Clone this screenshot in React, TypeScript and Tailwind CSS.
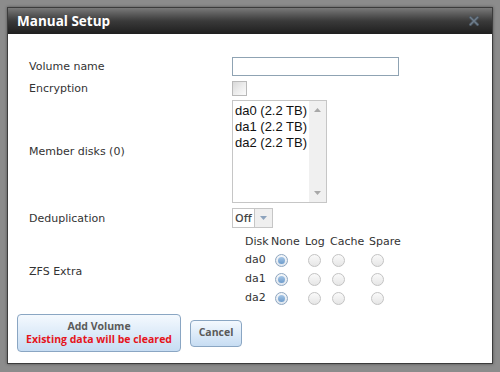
import React from 'react';

const labelCls = "w-[215px] pl-[12px] text-[11px] text-[#333] font-['DejaVu_Sans',Verdana,sans-serif] leading-none";

function Radio({ checked }: { checked?: boolean }) {
  return (
    <span
      className={
        "flex h-[13px] w-[13px] items-center justify-center rounded-full border " +
        (checked ? "border-[#8ea6c0] bg-gradient-to-b from-[#f4f7fa] to-[#dfe6ee]" : "border-[#c3c3c3] bg-gradient-to-b from-[#fafafa] to-[#e6e6e6]")
      }
    >
      {checked && <span className="h-[7px] w-[7px] rounded-full bg-gradient-to-b from-[#a6c6e6] to-[#6c9bcb]" />}
    </span>
  );
}

export default function App() {
  const disks = ['da0', 'da1', 'da2'];

  return (
    <div className="h-[372px] w-[500px] bg-[#8c8c8c] p-[7px]">
      <div className="flex h-[357px] w-[486px] flex-col border border-[#3c3c3c] bg-white shadow-[0_0_3px_rgba(0,0,0,0.4)]">
        {/* title bar */}
        <div className="flex h-[26px] items-center justify-between bg-gradient-to-b from-[#7a7a7a] via-[#3a3a3a] to-[#1f1f1f] pl-[9px] pr-[13px]">
          <span className="font-['Open_Sans',sans-serif] text-[13.5px] font-bold text-white">Manual Setup</span>
          <svg width="10" height="10" viewBox="0 0 10 10">
            <path d="M1.5 1.5 L8.5 8.5 M8.5 1.5 L1.5 8.5" stroke="#4a5560" strokeWidth="3" strokeLinecap="square" />
            <path d="M1.5 1.5 L8.5 8.5 M8.5 1.5 L1.5 8.5" stroke="#6f7d8b" strokeWidth="1.4" strokeLinecap="square" />
          </svg>
        </div>

        {/* form body */}
        <div className="flex flex-col px-[9px] pt-[23px]">
          <div className="flex h-[19px] items-center">
            <div className={labelCls}>Volume name</div>
            <input className="h-[19px] w-[167px] border border-[#8fa3b3] outline-none" />
          </div>

          <div className="mt-[5px] flex h-[15px] items-center">
            <div className={labelCls}>Encryption</div>
            <span className="h-[15px] w-[15px] border border-[#b9b9b9] bg-gradient-to-br from-[#d8d8d8] via-[#ececec] to-[#fbfbfb]" />
          </div>

          <div className="mt-[4px] flex h-[103px] items-center">
            <div className={labelCls}>Member disks (0)</div>
            <div className="flex h-[103px] w-[95px] border border-[#c6c6c6]">
              <div className="flex-1 pl-[2px] pt-[2px] font-['Liberation_Sans',Arial,sans-serif] text-[13px] leading-[16px] text-[#111]">
                <div>da0 (2.2 TB)</div>
                <div>da1 (2.2 TB)</div>
                <div>da2 (2.2 TB)</div>
              </div>
              <div className="flex w-[17px] flex-col items-center justify-between bg-[#f0f0f0] py-[7px]">
                <svg width="7" height="4" viewBox="0 0 7 4"><path d="M0 4 L3.5 0 L7 4 Z" fill="#a8a8a8" /></svg>
                <svg width="7" height="4" viewBox="0 0 7 4"><path d="M0 0 L3.5 4 L7 0 Z" fill="#a8a8a8" /></svg>
              </div>
            </div>
          </div>

          <div className="mt-[5px] flex h-[20px] items-center">
            <div className={labelCls}>Deduplication</div>
            <div className="flex h-[20px] w-[41px] border border-[#c6c6c6]">
              <span className="flex w-[21px] items-center pl-[2px] font-['Open_Sans',sans-serif] text-[11px] font-semibold text-[#444]">Off</span>
              <span className="flex flex-1 items-center justify-center border-l border-[#c6c6c6] bg-[#efefef]">
                <svg width="7" height="4" viewBox="0 0 7 4"><path d="M0 0 L3.5 4 L7 0 Z" fill="#8da3bd" /></svg>
              </span>
            </div>
          </div>

          <div className="mt-[6px] flex h-[74px] items-center">
            <div className={labelCls}>ZFS Extra</div>
            <div className="ml-[13px] flex flex-col font-['DejaVu_Sans',Verdana,sans-serif] text-[11px] text-[#333]">
              <div className="flex h-[17px] items-center">
                <span className="w-[26px]">Disk</span>
                <span className="w-[34px]">None</span>
                <span className="w-[25px]">Log</span>
                <span className="w-[39px]">Cache</span>
                <span className="w-[37px]">Spare</span>
              </div>
              {disks.map((d) => (
                <div key={d} className="flex h-[19px] items-center">
                  <span className="w-[26px]">{d}</span>
                  <span className="w-[34px] pl-[4px]"><Radio checked /></span>
                  <span className="w-[25px] pl-[3px]"><Radio /></span>
                  <span className="w-[39px] pl-[2px]"><Radio /></span>
                  <span className="w-[37px] pl-[2px]"><Radio /></span>
                </div>
              ))}
            </div>
          </div>

          <div className="mt-[6px] flex items-center gap-[9px] font-['Open_Sans',sans-serif] text-[10.5px] font-bold">
            <button className="flex h-[38px] w-[164px] flex-col items-center justify-center rounded-[4px] border border-[#8aa6c3] bg-gradient-to-b from-[#f4f9fe] to-[#c7ddf3] leading-[13px]">
              <span className="text-[#5a5a5a]">Add Volume</span>
              <span className="text-[#e5141c]">Existing data will be cleared</span>
            </button>
            <button className="h-[27px] w-[52px] rounded-[4px] border border-[#8aa6c3] bg-gradient-to-b from-[#f4f9fe] to-[#c7ddf3] text-[#5a5a5a]">
              Cancel
            </button>
          </div>
        </div>
      </div>
    </div>
  );
}
